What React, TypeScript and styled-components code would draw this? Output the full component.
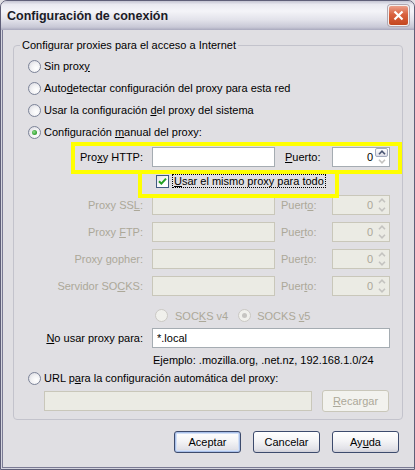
import React from 'react';
import styled, { createGlobalStyle } from 'styled-components';

// Connection settings dialog (XP silver look)

const GlobalStyle = createGlobalStyle`
  html, body {
    margin: 0;
    padding: 0;
    background: #e0dfe3;
  }
  body {
    font-family: "Liberation Sans", Arial, sans-serif;
    font-size: 11px;
    color: #000;
  }
  * {
    box-sizing: border-box;
  }
`;

const Window = styled.div`
  position: relative;
  width: 415px;
  height: 470px;
  display: flex;
  flex-direction: column;
  border: 1px solid #5f5f78;
  border-radius: 7px 7px 0 0;
  overflow: hidden;
  background: #d4d4de;
`;

const TitleBar = styled.div`
  height: 29px;
  flex-shrink: 0;
  display: flex;
  align-items: center;
  justify-content: space-between;
  padding: 0 5px 0 6px;
  background: linear-gradient(
    to bottom,
    #c4c4d2 0%,
    #e9e9f0 12%,
    #f4f4f8 35%,
    #e2e2ea 65%,
    #c8c8d6 90%,
    #a9a9bd 100%
  );
`;

const Title = styled.span`
  font-family: "Liberation Sans", Arial, sans-serif;
  font-weight: bold;
  font-size: 12.5px;
  color: #1b1b26;
`;

const CloseButton = styled.div`
  width: 21px;
  height: 21px;
  border-radius: 3px;
  border: 1px solid #f4f0f0;
  background: linear-gradient(to bottom, #eba08a 0%, #d9613f 45%, #c4471f 100%);
  display: flex;
  align-items: center;
  justify-content: center;
  box-shadow: 0 0 0 1px #b0a8b0;
`;

const Frame = styled.div`
  flex: 1;
  display: flex;
  padding: 0 1px 1px;
`;

const Body = styled.div`
  flex: 1;
  display: flex;
  flex-direction: column;
  background: #e0dfe3;
  border: 1px solid #7b7b94;
  border-top: none;
  padding: 9px 14px 0 10px;
`;

const GroupBox = styled.fieldset`
  margin: 0;
  border: 1px solid #c3c3cc;
  border-radius: 4px;
  padding: 3px 12px 7px 14px;
  min-width: 0;
`;

const GroupTitle = styled.legend`
  padding: 0 2px;
  margin-left: -8px;
  line-height: 13px;
`;

const Key = styled.span`
  text-decoration: underline;
`;

const Text = styled.span<{ $disabled?: boolean }>`
  color: ${(p) => (p.$disabled ? '#aca899' : '#000')};
  white-space: nowrap;
`;

const RadioRow = styled.div`
  height: 22px;
  display: flex;
  align-items: center;
  gap: 3px;
`;

const RadioCircle = styled.span<{ $checked?: boolean; $disabled?: boolean }>`
  width: 13px;
  height: 13px;
  flex-shrink: 0;
  border-radius: 50%;
  display: inline-flex;
  align-items: center;
  justify-content: center;
  border: 1px solid ${(p) => (p.$disabled ? '#cac8c4' : '#7c8398')};
  background: ${(p) =>
    p.$disabled
      ? '#f0f0ec'
      : 'radial-gradient(circle at 65% 65%, #ffffff 0%, #f2f2f4 45%, #d3d3dc 100%)'};

  &::after {
    content: '';
    width: 5px;
    height: 5px;
    border-radius: 50%;
    display: ${(p) => (p.$checked ? 'block' : 'none')};
    background: ${(p) =>
      p.$disabled
        ? '#c6c5c2'
        : 'radial-gradient(circle at 40% 40%, #8fe08a 0%, #3aa63a 60%, #217d21 100%)'};
  }
`;

const ProxyGrid = styled.div`
  display: grid;
  grid-template-columns: 107px 123px 57px 58px;
  align-items: center;
  row-gap: 7px;
  margin: 4px 0 0 17px;
`;

const LowerGrid = styled(ProxyGrid)`
  row-gap: 0;
  margin-top: 0;
`;

const FieldLabel = styled(Text)<{ $port?: number }>`
  text-align: ${(p) => (p.$port ? 'left' : 'right')};
  padding: ${(p) => (p.$port ? `0 0 0 ${p.$port}px` : '0 9px 0 0')};
`;

const TextBox = styled.input<{ $span?: boolean; $width?: number }>`
  grid-column: ${(p) => (p.$span ? '2 / span 3' : 'auto')};
  width: ${(p) => (p.$width ? `${p.$width}px` : '100%')};
  height: 20px;
  margin: 0;
  padding: 0 4px;
  font-family: "Liberation Sans", Arial, sans-serif;
  font-size: 11px;
  color: #000;
  border: 1px solid #a5acb2;
  background: #fff;
  outline: none;
  border-radius: 0;

  &:disabled {
    background: #ebebe4;
    border-color: #c9c7ba;
  }
`;

const Spinner = styled.div<{ $disabled?: boolean }>`
  height: 20px;
  display: flex;
  border: 1px solid ${(p) => (p.$disabled ? '#c9c7ba' : '#a5acb2')};
  background: ${(p) => (p.$disabled ? '#ebebe4' : '#fff')};
  color: ${(p) => (p.$disabled ? '#aca899' : '#000')};
`;

const SpinValue = styled.span`
  flex: 1;
  text-align: right;
  padding-right: 2px;
  line-height: 18px;
`;

const ArrowColumn = styled.div`
  width: 14px;
  display: flex;
  flex-direction: column;
  gap: 0;
  padding: 0 1px 0 0;
`;

const ArrowButton = styled.div<{ $active?: boolean }>`
  flex: 1;
  display: flex;
  align-items: center;
  justify-content: center;
  border-radius: 2px;
  border: 1px solid ${(p) => (p.$active ? '#a2aabe' : 'transparent')};
  background: ${(p) =>
    p.$active ? 'linear-gradient(to bottom, #ffffff, #dcdce6)' : 'transparent'};
`;

const CheckRow = styled.div`
  grid-column: 2 / span 3;
  height: 14px;
  display: flex;
  align-items: center;
  gap: 3px;
  padding-left: 4px;
`;

const CheckBox = styled.span`
  width: 13px;
  height: 13px;
  flex-shrink: 0;
  display: inline-flex;
  align-items: center;
  justify-content: center;
  border: 1px solid #3f5a80;
  background: linear-gradient(135deg, #e4e4e8 0%, #ffffff 70%);
`;

const FocusText = styled.span`
  border: 1px dotted #000;
  padding: 0 1px;
  line-height: 12px;
`;

const VersionRow = styled.div`
  grid-column: 2 / span 3;
  height: 13px;
  margin-top: 13px;
  display: flex;
  align-items: center;
  gap: 10px;
  padding-left: 3px;
`;

const VersionOption = styled.div<{ $gap: number }>`
  display: flex;
  align-items: center;
  gap: ${(p) => p.$gap}px;
`;

const NoProxyLabel = styled(FieldLabel)`
  margin-top: 6px;
`;

const NoProxyBox = styled(TextBox)`
  margin-top: 6px;
`;

const Example = styled.span`
  grid-column: 2 / span 3;
  margin-top: 6px;
  padding-left: 1px;
  line-height: 13px;
  white-space: nowrap;
`;

const UrlRow = styled.div`
  display: flex;
  align-items: center;
  gap: 10px;
  margin-top: 1px;
  padding-left: 16px;
`;

const Button = styled.div<{ $default?: boolean; $disabled?: boolean }>`
  width: 67px;
  height: 22px;
  display: flex;
  align-items: center;
  justify-content: center;
  border-radius: 3px;
  border: 1px solid ${(p) => (p.$disabled ? '#c9c7ba' : '#3d4b6d')};
  color: ${(p) => (p.$disabled ? '#aca899' : '#000')};
  background: ${(p) =>
    p.$disabled
      ? '#f2f2ee'
      : 'linear-gradient(to bottom, #ffffff 0%, #f4f4f6 45%, #e2e2e8 85%, #cfcfd8 100%)'};
  box-shadow: ${(p) =>
    p.$default ? 'inset 0 0 0 1px #a9c0ea, inset 0 0 0 2px #d3e0f6' : 'none'};
`;

const ButtonRow = styled.div`
  display: flex;
  justify-content: flex-end;
  gap: 12px;
  margin-top: 11px;
  padding-right: 4px;
`;

const Highlight = styled.div<{ $x: number; $y: number; $w: number; $h: number }>`
  position: absolute;
  left: ${(p) => p.$x}px;
  top: ${(p) => p.$y}px;
  width: ${(p) => p.$w}px;
  height: ${(p) => p.$h}px;
  border: 4px solid #ffff00;
  pointer-events: none;
`;

const renderKey = (text: string): React.ReactNode => {
  const i = text.indexOf('&');
  if (i < 0) return text;
  return (
    <>
      {text.slice(0, i)}
      <Key>{text[i + 1]}</Key>
      {text.slice(i + 2)}
    </>
  );
};

const Chevron: React.FC<{ up?: boolean; color: string }> = ({ up, color }) => (
  <svg width="8" height="5" viewBox="0 0 8 5">
    <path
      d={up ? 'M1 4.2 L4 1.2 L7 4.2' : 'M1 0.8 L4 3.8 L7 0.8'}
      fill="none"
      stroke={color}
      strokeWidth="1.6"
    />
  </svg>
);

const PortSpinner: React.FC<{ disabled?: boolean }> = ({ disabled }) => (
  <Spinner $disabled={disabled}>
    <SpinValue>0</SpinValue>
    <ArrowColumn>
      <ArrowButton $active={!disabled}>
        <Chevron up color={disabled ? '#c4c3c0' : '#4a5674'} />
      </ArrowButton>
      <ArrowButton>
        <Chevron color="#c4c3c0" />
      </ArrowButton>
    </ArrowColumn>
  </Spinner>
);

const modes = [
  'Sin prox&y',
  'Auto&detectar configuración del proxy para esta red',
  'Usar la configuración &del proxy del sistema',
  'Configuración &manual del proxy:',
];

const proxyRows = [
  { label: 'Proxy SS&L:', port: 'Puert&o:' },
  { label: 'Proxy &FTP:', port: 'Pue&rto:' },
  { label: 'Proxy &gopher:', port: 'Puer&to:' },
  { label: 'Servidor SO&CKS:', port: 'Puer&to:' },
];

export default function App() {
  return (
    <>
      <GlobalStyle />
      <Window>
        <TitleBar>
          <Title>Configuración de conexión</Title>
          <CloseButton>
            <svg width="11" height="11" viewBox="0 0 11 11">
              <path d="M1.5 1.5 L9.5 9.5 M9.5 1.5 L1.5 9.5" stroke="#fff" strokeWidth="2.2" />
            </svg>
          </CloseButton>
        </TitleBar>
        <Frame>
          <Body>
            <GroupBox>
              <GroupTitle>Configurar proxies para el acceso a Internet</GroupTitle>
              {modes.map((m, i) => (
                <RadioRow key={m}>
                  <RadioCircle $checked={i === 3} />
                  <Text>{renderKey(m)}</Text>
                </RadioRow>
              ))}

              <ProxyGrid>
                <FieldLabel>{renderKey('Pro&xy HTTP:')}</FieldLabel>
                <TextBox readOnly value="" />
                <FieldLabel $port={10}>{renderKey('&Puerto:')}</FieldLabel>
                <PortSpinner />

                <CheckRow>
                  <CheckBox>
                    <svg width="9" height="9" viewBox="0 0 9 9">
                      <path d="M1 4.2 L3.4 6.6 L8 1.6" fill="none" stroke="#21a121" strokeWidth="2" />
                    </svg>
                  </CheckBox>
                  <FocusText>{renderKey('&Usar el mismo proxy para todo')}</FocusText>
                </CheckRow>

                {proxyRows.map((r) => (
                  <React.Fragment key={r.label}>
                    <FieldLabel $disabled>{renderKey(r.label)}</FieldLabel>
                    <TextBox disabled value="" />
                    <FieldLabel $disabled $port={6}>{renderKey(r.port)}</FieldLabel>
                    <PortSpinner disabled />
                  </React.Fragment>
                ))}
              </ProxyGrid>

              <LowerGrid>
                <VersionRow>
                  <VersionOption $gap={7}>
                    <RadioCircle $disabled />
                    <Text $disabled>{renderKey('SOC&KS v4')}</Text>
                  </VersionOption>
                  <VersionOption $gap={6}>
                    <RadioCircle $disabled $checked />
                    <Text $disabled>{renderKey('SOCKS &v5')}</Text>
                  </VersionOption>
                </VersionRow>

                <NoProxyLabel>{renderKey('&No usar proxy para:')}</NoProxyLabel>
                <NoProxyBox $span readOnly value="*.local" />

                <Example>Ejemplo: .mozilla.org, .net.nz, 192.168.1.0/24</Example>
              </LowerGrid>

              <RadioRow>
                <RadioCircle />
                <Text>{renderKey('URL p&ara la configuración automática del proxy:')}</Text>
              </RadioRow>
              <UrlRow>
                <TextBox disabled value="" $width={268} />
                <Button $disabled>{renderKey('&Recargar')}</Button>
              </UrlRow>
            </GroupBox>

            <ButtonRow>
              <Button $default>Aceptar</Button>
              <Button>Cancelar</Button>
              <Button>{renderKey('Ay&uda')}</Button>
            </ButtonRow>
          </Body>
        </Frame>

        <Highlight $x={70} $y={141} $w={331} $h={32} />
        <Highlight $x={137} $y={169} $w={201} $h={28} />
      </Window>
    </>
  );
}
